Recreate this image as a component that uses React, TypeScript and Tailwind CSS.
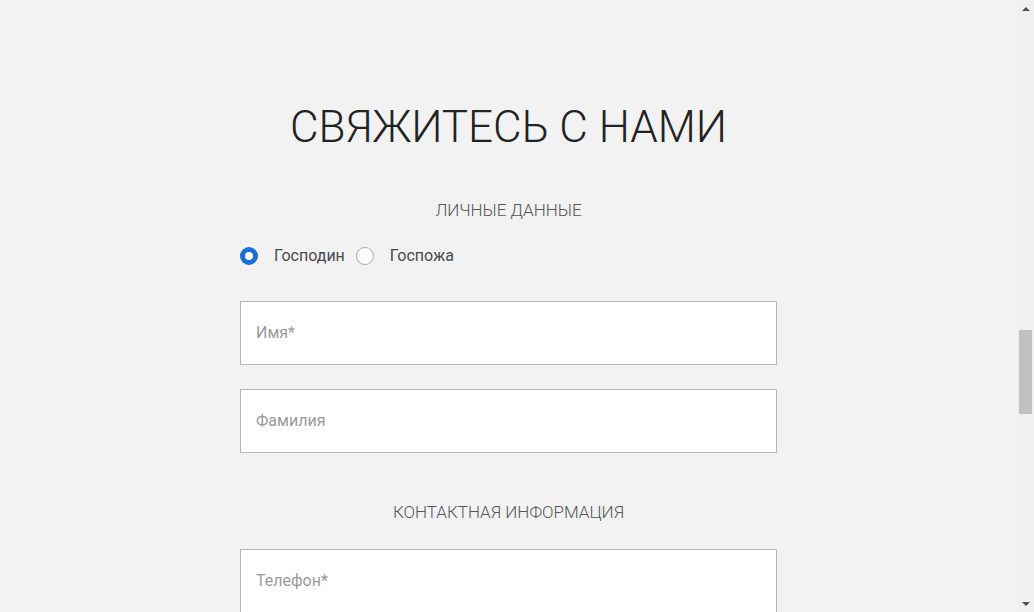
import React from "react";

const roboto = { fontFamily: 'Roboto, "Liberation Sans", sans-serif' };

function Radio({ checked, label }: { checked?: boolean; label: string }) {
  return (
    <label className="flex h-[24px] items-center">
      {checked ? (
        <span className="flex h-[18px] w-[18px] items-center justify-center rounded-full bg-[#1b6dd8]">
          <span className="h-[8px] w-[8px] rounded-full bg-white" />
        </span>
      ) : (
        <span className="h-[18px] w-[18px] rounded-full border border-[#a9a9a9] bg-white" />
      )}
      <span className="ml-[16px] text-[16px] leading-[24px] text-[#4a4a4a]">{label}</span>
    </label>
  );
}

function Field({ placeholder }: { placeholder: string }) {
  return (
    <div className="flex h-[64px] w-full items-center border border-[#b5b5b5] bg-white pl-[15px]">
      <span className="text-[16px] text-[#9a9a9a]">{placeholder}</span>
    </div>
  );
}

export default function App() {
  return (
    <div className="flex h-[612px] w-[1034px] overflow-hidden bg-[#f2f2f2]" style={roboto}>
      <main className="flex w-[1017px] flex-col items-center">
        <h1 className="mt-[101px] text-[44px] font-light leading-[52px] text-[#222]">
          СВЯЖИТЕСЬ С НАМИ
        </h1>
        <div className="mt-[45px] flex w-[537px] flex-col">
          <h2 className="text-center text-[17px] font-light leading-[24px] text-[#555]">
            ЛИЧНЫЕ ДАННЫЕ
          </h2>
          <div className="mt-[22px] flex items-center gap-[11px]">
            <Radio checked label="Господин" />
            <Radio label="Госпожа" />
          </div>
          <div className="mt-[33px] flex flex-col gap-[24px]">
            <Field placeholder="Имя*" />
            <Field placeholder="Фамилия" />
          </div>
          <h2 className="mt-[47px] text-center text-[17px] font-light leading-[24px] text-[#555]">
            КОНТАКТНАЯ ИНФОРМАЦИЯ
          </h2>
          <div className="mt-[25px] flex flex-col gap-[24px]">
            <Field placeholder="Телефон*" />
          </div>
        </div>
      </main>
      <div className="flex w-[17px] flex-col items-center bg-[#f1f1f1]">
        <div className="flex h-[17px] w-full items-center justify-center">
          <div className="h-0 w-0 border-x-[4px] border-b-[4px] border-x-transparent border-b-[#505050]" />
        </div>
        <div className="relative w-full flex-1">
          <div className="absolute left-[2px] top-[313px] h-[84px] w-[13px] bg-[#c1c1c1]" />
        </div>
        <div className="flex h-[17px] w-full items-center justify-center">
          <div className="h-0 w-0 border-x-[4px] border-t-[4px] border-x-transparent border-t-[#505050]" />
        </div>
      </div>
    </div>
  );
}
